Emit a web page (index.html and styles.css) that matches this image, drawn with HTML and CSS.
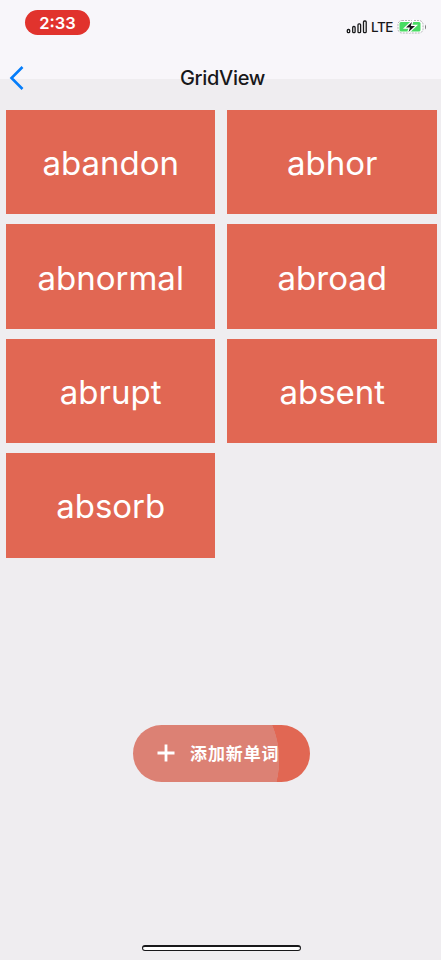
FILE: index.html
```
<!DOCTYPE html>
<html lang="zh">
<head>
<meta charset="utf-8">
<meta name="viewport" content="width=device-width, initial-scale=1">
<title>GridView</title>
<link rel="stylesheet" href="styles.css">
</head>
<body>
<header class="header">
  <div class="status">
    <span class="time">2:33</span>
    <div class="indicators">
      <svg class="signal" width="21" height="14" viewBox="0 0 21 14" fill="#fff" stroke="#18181a" stroke-width="1.3">
        <rect x="1.3" y="9.5" width="2.4" height="3.2" rx="1"/>
        <rect x="6.7" y="6.5" width="2.4" height="6.2" rx="1"/>
        <rect x="12" y="3.8" width="2.6" height="8.9" rx="1"/>
        <rect x="17.5" y="1" width="2.7" height="11.7" rx="1"/>
      </svg>
      <span class="network">LTE</span>
      <svg class="battery" width="30" height="16" viewBox="0 0 30 16">
        <rect x="1" y="1.5" width="25" height="12.5" rx="4" fill="#fff" stroke="#b3b3b5" stroke-dasharray="2 1"/>
        <rect x="2.5" y="3" width="21" height="9.5" rx="1.5" fill="#48db62"/>
        <path d="M28 5.500v5q1-1 1-2.500T28 5.500z" fill="#777"/>
        <path d="M15 3L9 8.600h4L11.500 13l6.500-6h-4.200z" fill="#18181a" stroke="#fff" stroke-width="2.4" paint-order="stroke"/>
      </svg>
    </div>
  </div>
  <nav class="nav">
    <svg class="back" width="16" height="26" viewBox="0 0 16 26" fill="none" stroke="#057dfa" stroke-width="2.6"><path d="M14.500 2L3.500 13l11 11"/></svg>
    <h1 class="title">GridView</h1>
  </nav>
</header>
<main class="grid">
  <div class="tile">abandon</div>
  <div class="tile">abhor</div>
  <div class="tile">abnormal</div>
  <div class="tile">abroad</div>
  <div class="tile">abrupt</div>
  <div class="tile">absent</div>
  <div class="tile">absorb</div>
</main>
<button class="add">
  <svg class="plus" width="18" height="18" viewBox="0 0 18 18" stroke="#fff" stroke-width="2.8"><path d="M9 .5v17M.5 9h17"/></svg>
  <span>添加新单词</span>
</button>
<div class="home"></div>
</body>
</html>
```
FILE: styles.css
```
* { box-sizing: border-box; }
body {
  margin: 0;
  height: 960px;
  display: flex;
  flex-direction: column;
  background: #efedf0;
  font-family: Inter, "Noto Sans CJK SC", sans-serif;
  color: #18181a;
  overflow: hidden;
}
.header { height: 79px; background: #f8f6fa; flex: none; }
.status {
  height: 55px;
  padding: 10px 14px 0 25px;
  display: flex;
  justify-content: space-between;
  align-items: flex-start;
}
.time {
  width: 65px;
  height: 25px;
  border-radius: 13px;
  background: #e1332d;
  color: #fff;
  font-size: 16.5px;
  font-weight: 600;
  line-height: 26px;
  text-align: center;
}
.indicators { display: flex; align-items: center; height: 34px; }
.network { margin: 0 4px; width: 22px; font-size: 13.5px; font-weight: 500; letter-spacing: -.4px; white-space: nowrap; }
.nav {
  height: 46px;
  padding-left: 8px;
  display: grid;
  grid-template-columns: 16px 1fr 20px;
  align-items: center;
}
.title { margin: 0; text-align: center; font-size: 20px; font-weight: 500; letter-spacing: -.3px; }
.grid {
  margin: 31px 4px 0 6px;
  display: grid;
  grid-template-columns: 209.4px 209.8px;
  grid-auto-rows: 104.4px;
  gap: 10px 12px;
}
.tile {
  display: flex;
  align-items: center;
  justify-content: center;
  background: #e16753;
  color: #fff;
  font-size: 33px;
  padding-top: 2px;
}
.add {
  margin: 167.4px 0 0 133px;
  width: 177px;
  height: 57px;
  flex: none;
  border: 0;
  border-radius: 29px;
  background: radial-gradient(circle at 55px 35px, #dc8174 91px, #e16753 91.5px);
  color: #fff;
  display: flex;
  align-items: center;
  gap: 15px;
  padding: 0 0 1px 24px;
  font: 700 17px/24px "Noto Sans CJK SC", sans-serif;
  letter-spacing: .9px;
  white-space: nowrap;
}
.plus { flex: none; }
.home {
  margin: auto auto 9px 142px;
  width: 159px;
  height: 6px;
  border: 1px solid #18181a;
  border-top-width: 2px;
  border-radius: 3px;
  background: #fff;
}
```
